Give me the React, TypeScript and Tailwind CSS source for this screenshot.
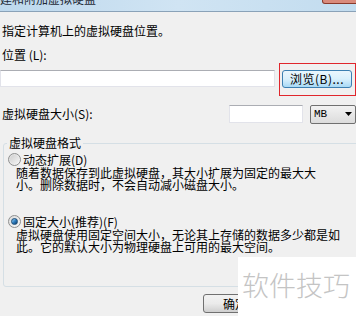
import React from 'react';

// Windows 7 style radio button
const Radio = ({ checked }: { checked?: boolean }) => (
  <span className="flex h-[13px] w-[13px] shrink-0 items-center justify-center rounded-full border border-[#8e8f8f] bg-gradient-to-br from-[#dcdcdc] to-[#f7f7f7]">
    {checked ? (
      <span className="h-[7px] w-[7px] rounded-full border border-[#1b4c76] bg-gradient-to-br from-[#9fd4f5] via-[#2f7fc0] to-[#0d3a6a]" />
    ) : (
      <span className="h-[9px] w-[9px] rounded-full bg-gradient-to-br from-[#cfcfcf] to-[#f4f4f4]" />
    )}
  </span>
);

const App = () => {
  return (
    <main className="relative h-[316px] w-[356px] overflow-hidden bg-[#f0f0f0] font-['Noto_Sans_CJK_SC',sans-serif] text-[12px] leading-[12px] text-black">
      {/* Title bar, cut at the top */}
      <div className="flex h-[12px] items-start justify-between overflow-hidden border-b border-[#8aa2b8] bg-gradient-to-r from-[#bdd8ed] via-[#d0e4f3] to-[#c2dcef]">
        <span className="-ml-[12px] -mt-[7px] whitespace-nowrap text-[12px] leading-[12px] text-[#1e2a36]">
          创建和附加虚拟硬盘
        </span>
        <div className="-mr-[4px] h-[4px] w-[38px] rounded-b-[3px] border border-t-0 border-[#8a3a2c] bg-[#d98b7c]" />
      </div>

      <div className="pl-[2px]">
        <p className="mt-[13px]">指定计算机上的虚拟硬盘位置。</p>
        <p className="mt-[12px]">位置 (L):</p>

        {/* Location row */}
        <div className="mt-[2px] flex items-start">
          <div className="-ml-[2px] mt-[7px] h-[17px] w-[275px] border border-[#e2e3ea] border-t-[#abadb3] bg-white" />
          {/* red highlight frame */}
          <div className="ml-[4px] h-[33px] w-[77px] bg-[#e0262c] p-[1px]">
            <div className="h-full w-full bg-[#f0f0f0] pl-[2px] pt-[6px]">
              <button className="flex h-[18px] w-[70px] items-center justify-center rounded-[3px] border border-[#3c7fb1] bg-gradient-to-b from-[#eaf6fd] via-[#d9f0fc] to-[#a7d9f5] text-[12px] leading-[12px] tracking-[0.5px] text-black">
                浏览(B)...
              </button>
            </div>
          </div>
        </div>

        {/* Size row */}
        <div className="mt-[9px] flex h-[18px] items-center">
          <span className="w-[229px]">虚拟硬盘大小(S):</span>
          <div className="h-[18px] w-[74px] border border-[#e2e3ea] border-t-[#abadb3] bg-white" />
          <div className="ml-[7px] flex h-[19px] w-[46px] shrink-0 items-center justify-between rounded-[2px] border border-[#707070] bg-gradient-to-b from-[#f2f2f2] to-[#dcdcdc] pl-[3px] pr-[3px]">
            <span className="font-['Liberation_Mono',monospace] text-[11px] leading-[11px]">MB</span>
            <svg width="7" height="4" viewBox="0 0 7 4">
              <path d="M0 0h7L3.5 4z" fill="#000" />
            </svg>
          </div>
        </div>

        {/* Disk format group */}
        <fieldset className="ml-[1px] mt-[14px] w-[380px] rounded-[3px] border border-[#d5dfe5] pb-[33px]">
          <legend className="ml-[3px] px-[2px] leading-[12px]">虚拟硬盘格式</legend>
          <div className="mt-[4px] flex h-[13px] items-center gap-[2px] pl-[4px]">
            <Radio />
            <span>动态扩展(D)</span>
          </div>
          <p className="mt-[1px] whitespace-nowrap pl-[12px]">
            随着数据保存到此虚拟硬盘，其大小扩展为固定的最大大
            <br />
            小。删除数据时，不会自动减小磁盘大小。
          </p>
          <div className="mt-[24px] flex h-[13px] items-center gap-[2px] pl-[4px]">
            <Radio checked />
            <span>固定大小(推荐)(F)</span>
          </div>
          <p className="mt-[1px] whitespace-nowrap pl-[12px]">
            虚拟硬盘使用固定空间大小，无论其上存储的数据多少都是如
            <br />
            此。它的默认大小为物理硬盘上可用的最大空间。
          </p>
        </fieldset>

        {/* Dialog buttons */}
        <div className="mt-[7px] flex">
          <button className="ml-[201px] flex h-[19px] w-[64px] items-center justify-center rounded-[3px] border border-[#707070] bg-gradient-to-b from-[#f2f2f2] via-[#ebebeb] to-[#cfcfcf] text-[12px] leading-[12px] text-black">
            确定
          </button>
        </div>
      </div>

      {/* Watermark */}
      <div className="absolute bottom-0 right-0 h-[59px] w-[118px] bg-white pl-[4px] pt-[14px]">
        <span className="block whitespace-nowrap font-['Noto_Sans_CJK_SC',sans-serif] text-[27px] font-light leading-[27px] text-[#c4c4c4]">
          软件技巧
        </span>
      </div>
    </main>
  );
};

export default App;
